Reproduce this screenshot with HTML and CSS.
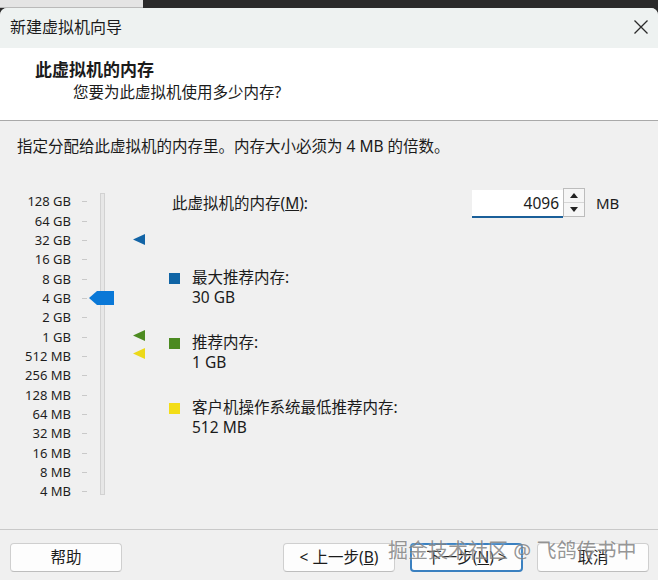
FILE: index.html
```html
<!DOCTYPE html>
<html lang="zh-CN">
<head>
<meta charset="utf-8">
<title>新建虚拟机向导</title>
<link rel="stylesheet" href="styles.css">
</head>
<body>
<div class="strip"><div class="strip-left"></div><div class="strip-right"></div></div>
<div class="window">
  <div class="titlebar">
    <span class="title">新建虚拟机向导</span>
    <svg class="close" width="16" height="16" viewBox="0 0 16 16"><path d="M1.5 1.5 L14.5 14.5 M14.5 1.5 L1.5 14.5" stroke="#2a2a2a" stroke-width="1.3" fill="none"/></svg>
  </div>
  <div class="header">
    <div class="h-title">此虚拟机的内存</div>
    <div class="h-sub">您要为此虚拟机使用多少内存?</div>
  </div>
  <div class="content">
    <p class="intro">指定分配给此虚拟机的内存里。内存大小必须为 4 MB 的倍数。</p>
    <div class="main">
      <div class="scale">
        <div>128 GB</div><div>64 GB</div><div>32 GB</div><div>16 GB</div>
        <div>8 GB</div><div>4 GB</div><div>2 GB</div><div>1 GB</div>
        <div>512 MB</div><div>256 MB</div><div>128 MB</div><div>64 MB</div>
        <div>32 MB</div><div>16 MB</div><div>8 MB</div><div>4 MB</div>
      </div>
      <div class="ticks">
        <i></i><i></i><i></i><i></i><i></i><i></i><i></i><i></i>
        <i></i><i></i><i></i><i></i><i></i><i></i><i></i><i></i>
      </div>
      <div class="slider">
        <div class="track"></div>
        <div class="thumb"></div>
      </div>
      <div class="markers">
        <div class="tri tri-blue"></div>
        <div class="tri tri-green"></div>
        <div class="tri tri-yellow"></div>
      </div>
      <div class="panel">
        <div class="mem-row">
          <span class="mem-label">此虚拟机的内存(<u>M</u>):</span>
          <div class="mem-input">4096</div>
          <div class="spin">
            <div class="spin-btn"><span class="arr-up"></span></div>
            <div class="spin-btn"><span class="arr-down"></span></div>
          </div>
          <span class="unit">MB</span>
        </div>
        <div class="legend">
          <div class="item">
            <span class="sq sq-blue"></span>
            <div class="item-text"><div>最大推荐内存:</div><div>30 GB</div></div>
          </div>
          <div class="item">
            <span class="sq sq-green"></span>
            <div class="item-text"><div>推荐内存:</div><div>1 GB</div></div>
          </div>
          <div class="item">
            <span class="sq sq-yellow"></span>
            <div class="item-text"><div>客户机操作系统最低推荐内存:</div><div>512 MB</div></div>
          </div>
        </div>
      </div>
    </div>
  </div>
  <div class="footer">
    <button class="btn">帮助</button>
    <div class="spacer"></div>
    <button class="btn">&lt; 上一步(<u>B</u>)</button>
    <button class="btn btn-next">下一步(<u>N</u>) &gt;</button>
    <button class="btn btn-cancel">取消</button>
    <div class="watermark">掘金技术社区 @ 飞鸽传书中</div>
  </div>
</div>
</body>
</html>
```
FILE: styles.css
```css
* { box-sizing: border-box; }
html, body {
  margin: 0;
  padding: 0;
}
body {
  width: 658px;
  height: 580px;
  overflow: hidden;
  background: #2b2b2b;
  font-family: "Noto Sans", "Noto Sans CJK SC", sans-serif;
  color: #1b1b1b;
}
.strip {
  display: flex;
  height: 8px;
}
.strip-left {
  width: 143px;
  background: #e4e4e4;
  border-bottom: 1px solid #b9b9b9;
}
.strip-right {
  flex: 1;
  background: #2b2b2b;
}
.window {
  background: #f0f0f0;
  height: 572px;
  border-radius: 7px 7px 0 0;
  overflow: hidden;
  position: relative;
}
.titlebar {
  height: 40px;
  background: #eef2f1;
  display: flex;
  align-items: flex-start;
  padding: 8px 0 0 10px;
  position: relative;
}
.title {
  font-size: 16px;
  line-height: 22px;
}
.close {
  position: absolute;
  left: 633px;
  top: 11px;
}
.header {
  height: 73px;
  background: #ffffff;
  border-bottom: 1px solid #a9a9a9;
  padding-top: 11px;
}
.h-title {
  font-weight: bold;
  font-size: 17px;
  line-height: 22px;
  padding-left: 35px;
}
.h-sub {
  font-size: 15.5px;
  line-height: 22px;
  padding-left: 73px;
}
.content {
  height: 408px;
  padding-top: 14px;
}
.intro {
  margin: 0;
  padding-left: 17px;
  font-size: 15.5px;
  line-height: 22px;
}
.main {
  margin-top: 31px;
  display: flex;
  align-items: flex-start;
}
.scale {
  width: 71px;
  padding-top: 4.33px;
  text-align: right;
  font-size: 13px;
  line-height: 19.33px;
  color: #1e1e1e;
  white-space: nowrap;
}
.ticks {
  width: 5px;
  margin-left: 11px;
  padding-top: 4.33px;
  display: flex;
  flex-direction: column;
}
.ticks i {
  height: 19.33px;
  display: flex;
  align-items: center;
}
.ticks i::before {
  content: "";
  display: block;
  width: 5px;
  height: 1px;
  background: #c9c9c9;
}
.slider {
  position: relative;
  width: 5px;
  margin-left: 13px;
  margin-top: 5px;
}
.track {
  width: 5px;
  height: 302px;
  background: #e7e7e7;
  border: 1px solid #d2d2d2;
}
.thumb {
  position: absolute;
  left: -11px;
  top: 98px;
  width: 25px;
  height: 14px;
  background: #0a78d7;
  clip-path: polygon(0 50%, 8px 0, 100% 0, 100% 100%, 8px 100%);
}
.markers {
  width: 13px;
  margin-left: 28px;
  display: flex;
  flex-direction: column;
}
.tri {
  width: 12px;
  height: 11px;
  clip-path: polygon(0 50%, 100% 0, 100% 100%);
}
.tri-blue { background: #1264a6; margin-top: 46px; }
.tri-green { background: #4d8b21; margin-top: 85px; }
.tri-yellow { background: #ecd91a; margin-top: 7px; }
.panel {
  margin-left: 23px;
  flex: 1;
}
.mem-row {
  display: flex;
  align-items: flex-start;
  height: 30px;
}
.mem-label {
  width: 303px;
  padding-left: 3px;
  font-size: 15.5px;
  line-height: 30px;
}
.mem-input {
  width: 91px;
  height: 28px;
  margin-top: 2px;
  background: #ffffff;
  border-bottom: 2px solid #1a5f99;
  text-align: right;
  padding-right: 4px;
  font-size: 15.5px;
  line-height: 26px;
}
.spin {
  width: 22px;
  height: 29px;
  border: 1px solid #bcbcbc;
  background: #f6f6f6;
  display: flex;
  flex-direction: column;
}
.spin-btn {
  flex: 1;
  display: flex;
  align-items: center;
  justify-content: center;
}
.spin-btn + .spin-btn {
  border-top: 1px solid #d6d6d6;
}
.arr-up {
  width: 0;
  height: 0;
  border-left: 4px solid transparent;
  border-right: 4px solid transparent;
  border-bottom: 5px solid #222;
}
.arr-down {
  width: 0;
  height: 0;
  border-left: 4px solid transparent;
  border-right: 4px solid transparent;
  border-top: 5px solid #222;
}
.unit {
  margin-left: 11px;
  font-size: 15px;
  line-height: 30px;
}
.legend {
  margin-top: 50px;
  display: flex;
  flex-direction: column;
  gap: 26px;
}
.item {
  display: flex;
  align-items: flex-start;
}
.sq {
  width: 11px;
  height: 11px;
  margin-top: 5px;
  margin-right: 12px;
  flex: none;
}
.sq-blue { background: #0f64a5; }
.sq-green { background: #4b8a20; }
.sq-yellow { background: #f3dd17; }
.item-text {
  font-size: 15.5px;
  line-height: 19.5px;
}
.footer {
  position: relative;
  height: 51px;
  border-top: 1px solid #c9c9c9;
  display: flex;
  align-items: flex-start;
  padding: 13px 9px 0 10px;
}
.spacer { flex: 1; }
.btn {
  width: 112px;
  height: 29px;
  background: #fdfdfd;
  border: 1px solid #cfcfcf;
  border-bottom-color: #bdbdbd;
  border-radius: 4px;
  font-family: "Noto Sans", "Noto Sans CJK SC", sans-serif;
  font-size: 15.5px;
  line-height: 25px;
  color: #1b1b1b;
  padding: 0;
  margin: 0;
}
.btn-next {
  width: 113px;
  margin-left: 15px;
  border: 2px solid #3a80c0;
  line-height: 23px;
}
.btn-cancel {
  margin-left: 14px;
}
.watermark {
  position: absolute;
  left: 388px;
  top: 8px;
  font-size: 20px;
  line-height: 26px;
  color: rgba(110, 110, 110, 0.72);
  white-space: nowrap;
  text-shadow: 0 0 2px rgba(255, 255, 255, 0.6);
  pointer-events: none;
}
```
